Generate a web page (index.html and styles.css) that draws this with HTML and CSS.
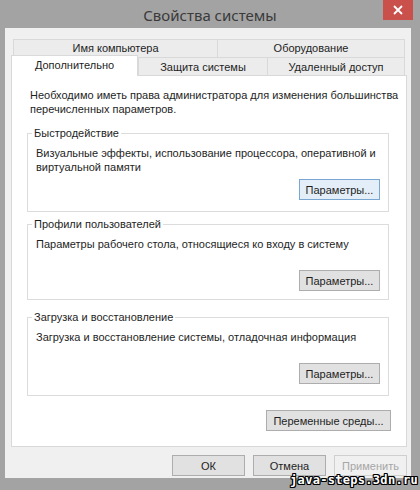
FILE: index.html
```html
<!DOCTYPE html>
<html lang="ru">
<head>
    <meta charset="UTF-8">
    <meta name="viewport" content="width=device-width, initial-scale=1.0">
    <title>Свойства системы</title>
    <link rel="stylesheet" href="styles.css">
</head>
<body>
    <div class="window">
        <div class="titlebar">
            <span></span>
            <div class="title">Свойства системы</div>
            <button class="close" type="button">
                <svg width="10" height="10" viewBox="0 0 10 10">
                    <path d="M1 1 L9 9 M9 1 L1 9" stroke="#fff" stroke-width="1.8" fill="none"/>
                </svg>
            </button>
        </div>
        <div class="client">
            <div class="tabs">
                <div class="tab-row tab-row-back">
                    <div class="tab tab-computer">Имя компьютера</div>
                    <div class="tab tab-hardware">Оборудование</div>
                </div>
                <div class="tab-row tab-row-front">
                    <div class="tab tab-active">Дополнительно</div>
                    <div class="tab tab-protect">Защита системы</div>
                    <div class="tab tab-remote">Удаленный доступ</div>
                </div>
            </div>
            <div class="panel">
                <p class="note">Необходимо иметь права администратора для изменения большинства перечисленных параметров.</p>

                <fieldset class="group group-perf">
                    <legend>Быстродействие</legend>
                    <p class="group-text">Визуальные эффекты, использование процессора, оперативной и виртуальной памяти</p>
                    <div class="group-actions">
                        <button class="btn btn-focus" type="button">Параметры...</button>
                    </div>
                </fieldset>

                <fieldset class="group group-profiles">
                    <legend>Профили пользователей</legend>
                    <p class="group-text">Параметры рабочего стола, относящиеся ко входу в систему</p>
                    <div class="group-actions">
                        <button class="btn" type="button">Параметры...</button>
                    </div>
                </fieldset>

                <fieldset class="group group-boot">
                    <legend>Загрузка и восстановление</legend>
                    <p class="group-text">Загрузка и восстановление системы, отладочная информация</p>
                    <div class="group-actions">
                        <button class="btn" type="button">Параметры...</button>
                    </div>
                </fieldset>

                <div class="env-row">
                    <button class="btn btn-env" type="button">Переменные среды...</button>
                </div>
            </div>
            <div class="dialog-buttons">
                <button class="btn btn-dialog" type="button">ОК</button>
                <button class="btn btn-dialog" type="button">Отмена</button>
                <button class="btn btn-dialog" type="button" disabled>Применить</button>
            </div>
        </div>
        <div class="watermark">java-steps.3dn.ru</div>
    </div>
</body>
</html>
```

FILE: styles.css
```css
body {
    margin: 0;
    padding: 0;
    background-color: #a3a3a3;
    font-family: "Liberation Sans", Arial, sans-serif;
    font-size: 11px;
    color: #1e1e1e;
}
.window {
    position: relative;
    width: 420px;
    height: 490px;
    background-color: #a3a3a3;
}
.titlebar {
    height: 28px;
    display: grid;
    grid-template-columns: 1fr auto 1fr;
    align-items: start;
}
.title {
    font-family: "Noto Sans", sans-serif;
    font-size: 15px;
    line-height: 30px;
    color: #3a3a3a;
}
.close {
    justify-self: end;
    margin-right: 7px;
    width: 30px;
    height: 20px;
    border: none;
    padding: 0;
    background-color: #c9504b;
    display: flex;
    align-items: center;
    justify-content: center;
}
.client {
    margin: 0 9px 0 5px;
    height: 450px;
    background-color: #f0f0f0;
    padding: 11px 4px 0 6px;
    box-sizing: border-box;
}
.tabs {
    position: relative;
    z-index: 1;
}
.tab-row {
    display: flex;
}
.tab {
    box-sizing: border-box;
    border: 1px solid #d9d9d9;
    background-color: #ececec;
    text-align: center;
    white-space: nowrap;
}
.tab + .tab {
    border-left: none;
}
.tab-row-back {
    margin-left: 2px;
    height: 18px;
}
.tab-row-back .tab {
    line-height: 17px;
    border-bottom: none;
}
.tab-computer {
    width: 205px;
}
.tab-hardware {
    width: 187px;
}
.tab-row-front {
    height: 19px;
    margin-top: -1px;
}
.tab-row-front .tab {
    line-height: 18px;
    margin-top: 1px;
    height: 19px;
}
.tab-active {
    width: 127px;
    background-color: #fff;
    border-bottom: none;
}
.tab-row-front .tab-active {
    margin-top: -1px;
    height: 21px;
    line-height: 19px;
}
.tab-protect {
    width: 130px;
    border-left: 1px solid #d9d9d9 !important;
}
.tab-remote {
    width: 137px;
}
.panel {
    width: 396px;
    height: 372px;
    box-sizing: border-box;
    border: 1px solid #d9d9d9;
    background-color: #fff;
    padding: 12px 17px 0 15px;
}
.note {
    margin: 0 -12px 0 0;
    padding-left: 3px;
    line-height: 14px;
}
.group {
    margin: 0;
    padding: 0 9px 0 8px;
    border: 1px solid #dcdcdc;
}
.group legend {
    padding: 0 2px;
    margin-left: -4px;
    line-height: 14px;
}
.group-text {
    margin: 6px 0 0;
    line-height: 14px;
    min-height: 28px;
}
.group-actions {
    display: flex;
    justify-content: flex-end;
    margin-top: 5px;
}
.group-perf {
    margin-top: 10px;
    padding-bottom: 11px;
}
.group-profiles {
    margin-top: 5px;
    padding-bottom: 8px;
}
.group-boot {
    margin-top: 10px;
    padding-bottom: 11px;
}
.btn {
    font-family: "Liberation Sans", Arial, sans-serif;
    font-size: 11px;
    color: #1e1e1e;
    height: 21px;
    padding: 0 4px;
    border: 1px solid #adadad;
    background-color: #e1e1e1;
    box-sizing: border-box;
    white-space: nowrap;
}
.group-actions .btn {
    width: 81px;
    margin-right: -1px;
}
.btn-focus {
    background-color: #e4eef8;
    border-color: #7aa6d2;
}
.env-row {
    display: flex;
    justify-content: flex-end;
    margin-top: 14px;
    margin-right: -2px;
}
.btn-env {
    width: 125px;
}
.dialog-buttons {
    display: flex;
    justify-content: flex-end;
    gap: 8px;
    margin-top: 8px;
    width: 396px;
}
.btn-dialog {
    width: 73px;
}
.btn-dialog:disabled {
    color: #a6a6a6;
    border-color: #cfcfcf;
    background-color: #f0f0f0;
}
.watermark {
    position: absolute;
    right: 2px;
    bottom: 3px;
    font-family: "DejaVu Sans Mono", monospace;
    font-weight: bold;
    font-size: 12px;
    letter-spacing: 0.3px;
    color: #fff;
    text-shadow: 1px 0 0 #000, -1px 0 0 #000, 0 1px 0 #000, 0 -1px 0 #000,
                 1px 1px 0 #000, -1px -1px 0 #000, 1px -1px 0 #000, -1px 1px 0 #000;
}
```
